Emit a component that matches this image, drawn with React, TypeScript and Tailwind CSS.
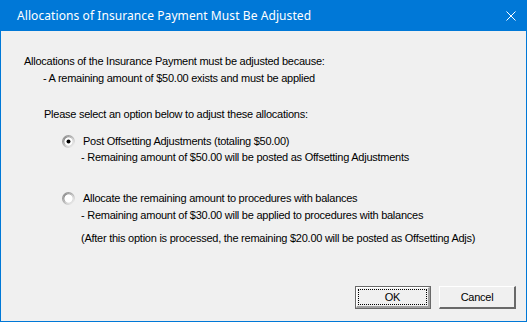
import type { ReactNode } from "react";

const sans = "font-['Liberation_Sans',Arial,sans-serif]";

function Radio({ checked }: { checked?: boolean }) {
  return (
    <svg width="13" height="13" viewBox="0 0 13 13" className="shrink-0" aria-hidden>
      <defs>
        <linearGradient id="outer" x1="0" y1="0" x2="1" y2="1">
          <stop offset="0" stopColor="#8a8a8a" />
          <stop offset="0.55" stopColor="#b8b8b8" />
          <stop offset="1" stopColor="#ffffff" />
        </linearGradient>
        <linearGradient id="inner" x1="0" y1="0" x2="1" y2="1">
          <stop offset="0" stopColor="#5a5a5a" />
          <stop offset="0.55" stopColor="#c8c8c8" />
          <stop offset="1" stopColor="#e6e6e6" />
        </linearGradient>
      </defs>
      <circle cx="6.5" cy="6.5" r="5.9" fill="none" stroke="url(#outer)" strokeWidth="1.2" />
      <circle cx="6.5" cy="6.5" r="4.7" fill="#ffffff" stroke="url(#inner)" strokeWidth="1.1" />
      {checked && <circle cx="6.5" cy="6.5" r="2" fill="#000000" />}
    </svg>
  );
}

function Option({
  checked,
  label,
  children,
  className,
}: {
  checked?: boolean;
  label: string;
  children: ReactNode;
  className?: string;
}) {
  return (
    <div className={className}>
      <div className="flex items-center">
        <span className="ml-[38px] flex w-[21px]">
          <Radio checked={checked} />
        </span>
        <span>{label}</span>
      </div>
      <div className="ml-[57px]">{children}</div>
    </div>
  );
}

export default function App() {
  return (
    <div className={`flex h-[322px] w-[527px] flex-col bg-[#f0f0f0] text-[11px] leading-[17px] tracking-[-0.25px] text-black ${sans}`}>
      <div className="flex h-[31px] shrink-0 items-center justify-between bg-[#0078d7] pl-[17px] pr-[11px] tracking-normal text-white">
        <span className="font-['Noto_Sans',sans-serif] text-[12px] leading-none tracking-[0.08px]">
          Allocations of Insurance Payment Must Be Adjusted
        </span>
        <svg width="10" height="10" viewBox="0 0 10 10" aria-hidden>
          <path d="M0.5 0.5 L9.5 9.5 M9.5 0.5 L0.5 9.5" stroke="#ffffff" strokeWidth="1" />
        </svg>
      </div>

      <div className="flex flex-1 flex-col border-x border-b border-[#0078d7] pl-[23px] pr-[10px] pt-[22px] pb-[12px]">
        <p>Allocations of the Insurance Payment must be adjusted because:</p>
        <p className="pl-[19px]">- A remaining amount of $50.00 exists and must be applied</p>

        <p className="mt-[19px] pl-[20px]">Please select an option below to adjust these allocations:</p>

        <Option checked label="Post Offsetting Adjustments (totaling $50.00)" className="mt-[10px]">
          <p className="-mt-[1px]">- Remaining amount of $50.00 will be posted as Offsetting Adjustments</p>
        </Option>

        <Option label="Allocate the remaining amount to procedures with balances" className="mt-[24px]">
          <p>- Remaining amount of $30.00 will be applied to procedures with balances</p>
          <p className="mt-[6px]">
            (After this option is processed, the remaining $20.00 will be posted as Offsetting Adjs)
          </p>
        </Option>

        <div className="mt-auto flex justify-end gap-[8px]">
          <button className="h-[23px] w-[76px] border border-[#696969] bg-[#f0f0f0] p-0">
            <span className="flex h-full w-full items-center justify-center border-b-2 border-r-2 border-l border-t border-b-[#a0a0a0] border-r-[#a0a0a0] border-l-white border-t-white p-[1px]">
              <span className="flex h-full w-full items-center justify-center border border-dotted border-black">
                OK
              </span>
            </span>
          </button>
          <button className="h-[23px] w-[77px] border-b-2 border-r-2 border-l border-t border-b-[#696969] border-r-[#696969] border-l-white border-t-white bg-[#f0f0f0] p-0">
            Cancel
          </button>
        </div>
      </div>
    </div>
  );
}
